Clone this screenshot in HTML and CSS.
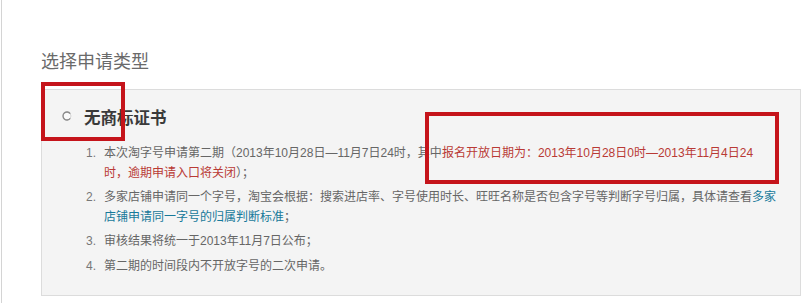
FILE: index.html
```html
<!DOCTYPE html>
<html lang="zh-CN">
<head>
<meta charset="utf-8">
<title>选择申请类型</title>
<link rel="stylesheet" href="styles.css">
</head>
<body>
<div class="page">
  <h2 class="title">选择申请类型</h2>
  <div class="panel">
    <label class="option">
      <svg class="radio" width="10" height="10" viewBox="0 0 10 10" aria-hidden="true">
        <circle cx="5" cy="5" r="4" fill="#fafafa" stroke="#d6d6d6" stroke-width="1"/>
        <path d="M8.2 2.6 A4 4 0 1 0 8.2 7.4" fill="none" stroke="#8a8a8a" stroke-width="1.3"/>
      </svg>
      <span class="option-name">无商标证书</span>
    </label>
    <ol class="rules">
      <li>本次淘字号申请第二期（2013年10月28日—11月7日24时，其中<span class="warn">报名开放日期为：2013年10月28日0时—2013年11月4日24<br>时，逾期申请入口将关闭</span>）；</li>
      <li>多家店铺申请同一个字号，淘宝会根据：搜索进店率、字号使用时长、旺旺名称是否包含字号等判断字号归属，具体请查看<a class="link" href="#">多家店铺申请同一字号的归属判断标准</a>；</li>
      <li>审核结果将统一于2013年11月7日公布；</li>
      <li>第二期的时间段内不开放字号的二次申请。</li>
    </ol>
  </div>
  <div class="mark mark-radio"></div>
  <div class="mark mark-date"></div>
</div>
</body>
</html>
```

FILE: styles.css
```css
html, body {
  margin: 0;
  padding: 0;
  background: #ffffff;
}

body {
  font-family: "Noto Sans CJK SC", "Microsoft YaHei", sans-serif;
  color: #666666;
}

.page {
  position: relative;
  margin-left: 1px;
  border-left: 1px solid #d4d4d4;
  min-height: 303px;
  box-sizing: border-box;
  padding-top: 48px;
  padding-left: 39px;
}

.title {
  margin: 0 0 17px 0;
  font-size: 18px;
  line-height: 24px;
  font-weight: normal;
  color: #6a6a6a;
}

.panel {
  width: 760px;
  box-sizing: border-box;
  border: 1px solid #dcdcdc;
  background: #f4f4f4;
  padding: 15px 20px 19px 20px;
}

.option {
  display: flex;
  align-items: center;
  gap: 12px;
  height: 24px;
  margin-bottom: 14px;
}

.radio {
  display: block;
  margin-top: -2px;
}

.option-name {
  font-size: 16.5px;
  font-weight: bold;
  color: #3a3a3a;
  line-height: 24px;
}

.rules {
  list-style: none;
  counter-reset: rule;
  margin: 0;
  padding: 0 0 0 24px;
  width: 694px;
  font-family: "Liberation Sans", "Noto Sans CJK SC", sans-serif;
  font-size: 12px;
  line-height: 20px;
}

.rules li {
  counter-increment: rule;
  padding-left: 18px;
  margin-bottom: 4px;
}

.rules li:nth-child(3) {
  margin-bottom: 5px;
}

.rules li:last-child {
  margin-bottom: 0;
}

.rules li::before {
  content: counter(rule) ".";
  display: inline-block;
  width: 18px;
  margin-left: -18px;
  font-size: 12px;
  color: #777777;
}

.warn {
  color: #b93a35;
}

.link {
  color: #17799a;
  text-decoration: none;
}

.mark {
  position: absolute;
  border: 4px solid #c5141b;
  box-sizing: border-box;
}

.mark-radio {
  left: 39px;
  top: 82px;
  width: 84px;
  height: 59px;
}

.mark-date {
  left: 423px;
  top: 112px;
  width: 354px;
  height: 72px;
}
```
